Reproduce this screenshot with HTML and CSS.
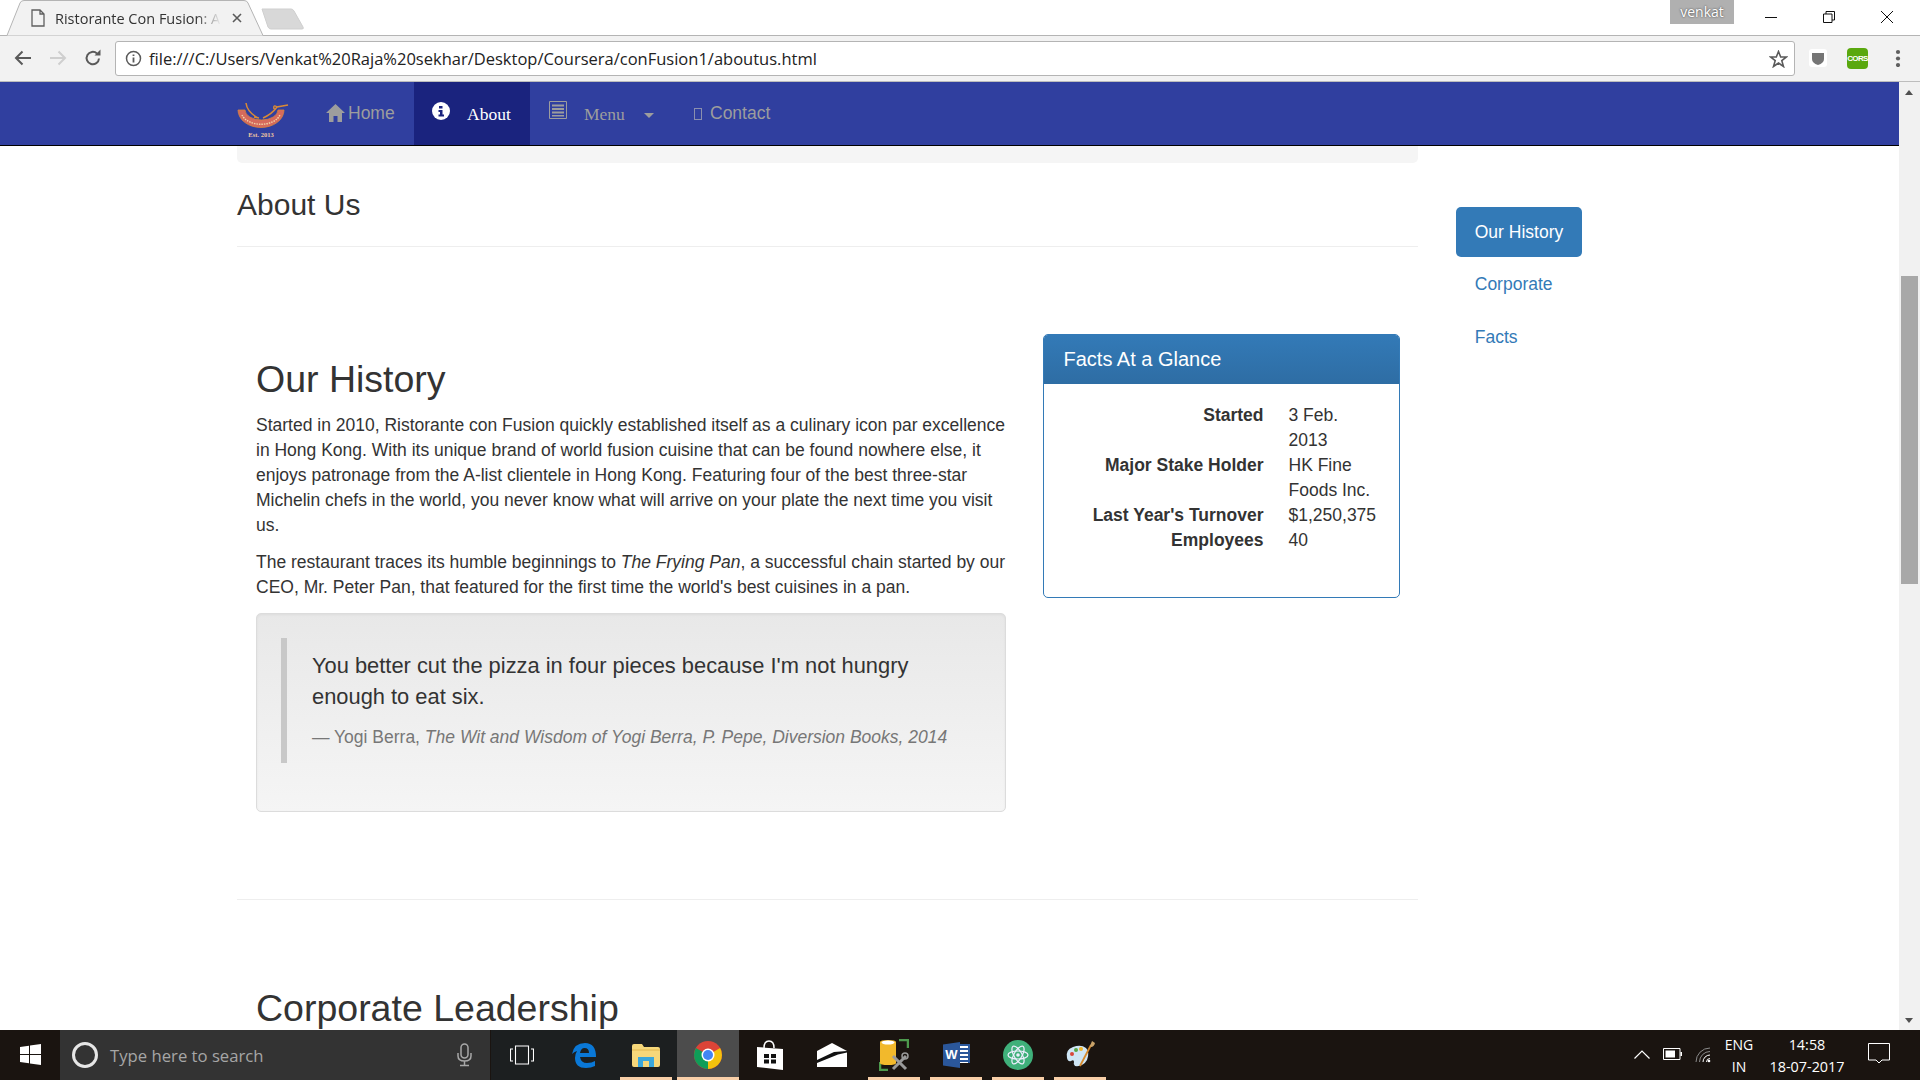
FILE: index.html
```html
<!DOCTYPE html>
<html lang="en">
<head>
<meta charset="utf-8">
<title>Ristorante Con Fusion: About Us</title>
<link rel="stylesheet" href="styles.css">
</head>
<body>
<header class="tabstrip">
  <div class="tab">
    <svg class="tab-shape" width="270" height="36" viewBox="0 0 270 36"><path d="M0 35.5H7L20 3Q21 .5 24 .5H244Q247 .5 248 3L263 35.5H270" fill="#f2f2f2" stroke="#b4b4b4"/></svg>
    <svg class="tab-doc" width="14" height="18" viewBox="0 0 14 18"><path d="M1 1H9L13 5V17H1Z M9 1V5H13" fill="none" stroke="#5f5f5f" stroke-width="1.3"/></svg>
    <span class="tab-title">Ristorante Con Fusion: About Us</span>
    <svg class="tab-x" width="10" height="10" viewBox="0 0 10 10"><path d="M1 1L9 9M9 1L1 9" stroke="#5a5a5a" stroke-width="1.6"/></svg>
  </div>
  <svg class="newtab" width="44" height="22" viewBox="0 0 44 22"><path d="M1 1H30Q32 1 33 3L42 19Q43 21 41 21H10Q8 21 7 19Z" fill="#d8d8d8" stroke="#cfcfcf"/></svg>
  <div class="strip-fill"></div>
  <div class="user">venkat</div>
  <div class="winbtns">
    <svg width="12" height="12" viewBox="0 0 12 12"><path d="M0 6.5H12" stroke="#111"/></svg>
    <svg width="12" height="12" viewBox="0 0 12 12"><path d="M.5 3H9V11.500H.5Z M3 3V.5H11.500V9H9" fill="none" stroke="#111"/></svg>
    <svg width="12" height="12" viewBox="0 0 12 12"><path d="M0 0L12 12M12 0L0 12" stroke="#111"/></svg>
  </div>
</header>
<div class="toolbar">
  <svg class="tb-icon" width="18" height="16" viewBox="0 0 18 16"><path d="M17 8H2M8.500 1.500L2 8L8.500 14.500" fill="none" stroke="#5a5a5a" stroke-width="2"/></svg>
  <svg class="tb-icon" width="18" height="16" viewBox="0 0 18 16"><path d="M1 8H16M9.500 1.500L16 8L9.500 14.500" fill="none" stroke="#cfcfcf" stroke-width="2"/></svg>
  <svg class="tb-icon" width="18" height="18" viewBox="0 0 18 18"><path d="M15 9.500A6.200 6.200 0 1 1 13 4.500" fill="none" stroke="#5a5a5a" stroke-width="2"/><path d="M10.500 6.500H16.500V.5Z" fill="#5a5a5a"/></svg>
  <div class="omnibox">
    <svg width="17" height="17" viewBox="0 0 17 17"><circle cx="8.500" cy="8.500" r="7" fill="none" stroke="#5a5a5a" stroke-width="1.500"/><path d="M8.500 7.500V12.500M8.500 4.500V6" stroke="#5a5a5a" stroke-width="1.800"/></svg>
    <span class="url">file:///C:/Users/Venkat%20Raja%20sekhar/Desktop/Coursera/conFusion1/aboutus.html</span>
    <svg width="19" height="18" viewBox="0 0 19 18"><path d="M9.500 1.500L11.700 7H17.500L12.800 10.600L14.500 16.500L9.500 13L4.500 16.500L6.200 10.600L1.500 7H7.300Z" fill="none" stroke="#5a5a5a" stroke-width="1.600"/></svg>
  </div>
  <div class="ext ext-shield"><svg width="12" height="13" viewBox="0 0 12 13"><path d="M0 1H12V7Q12 11 6 13Q0 11 0 7Z" fill="#757575"/></svg></div>
  <div class="ext-cors">CORS</div>
  <svg class="kebab" width="6" height="18" viewBox="0 0 6 18"><circle cx="3" cy="3" r="2.100" fill="#5f5f5f"/><circle cx="3" cy="9.500" r="2.100" fill="#5f5f5f"/><circle cx="3" cy="16" r="2.100" fill="#5f5f5f"/></svg>
</div>
<div class="viewport">
  <main class="page">
    <nav class="navbar">
      <svg class="logo" width="52" height="36" viewBox="0 0 52 36">
        <path d="M1 7H8A16.500 10 0 0 0 41 7H47A23 17.500 0 0 1 1 7Z" fill="#d66a5c" stroke="#d8843e" stroke-width=".8"/>
        <path d="M5 12A20 13.500 0 0 0 43 12" fill="none" stroke="#f2d3a6" stroke-width="1.400" stroke-dasharray="1.500 1"/>
        <path d="M9 0Q10 9 21 15M22 15L17 14M26 15Q35 11 40 4L51 2M40 4Q36 1 37 6" fill="none" stroke="#d98a35" stroke-width="1.500"/>
        <text x="24" y="34" class="logo-est">Est. 2013</text>
      </svg>
      <a class="navlink nav-home">
        <svg width="19" height="18" viewBox="0 0 19 18"><path d="M9.500 0L19 9H16V18H11.500V12H7.500V18H3V9H0Z" fill="#9d9d9d"/></svg>
        <span class="navtext">Home</span>
      </a>
      <a class="navlink nav-about">
        <svg class="ic-info" width="18" height="18" viewBox="0 0 18 18"><circle cx="9" cy="9" r="9" fill="#fff"/><path d="M7 4H10.500V6.500H7ZM6.500 8H10.500V12.500H12V14.500H6.500V12.500H8V10H6.500Z" fill="#1a237e"/></svg>
        <span class="serif">About</span>
      </a>
      <a class="navlink nav-menu">
        <svg class="ic-list" width="18" height="18" viewBox="0 0 18 18"><path d="M.5.5H17.500V17.500H.5Z" fill="none" stroke="#9d9d9d"/><path d="M3 3.500H15V5.500H3ZM3 7H15V9H3ZM3 10.500H15V12.500H3ZM3 14H15V15.500H3Z" fill="#9d9d9d"/></svg>
        <span class="serif">Menu</span>
        <span class="caret"></span>
      </a>
      <a class="navlink nav-contact">
        <span class="tofu"></span>
        <span class="navtext">Contact</span>
      </a>
    </nav>
    <div class="content">
      <div class="main-col">
        <div class="crumb"></div>
        <h3 class="page-title">About Us</h3>
        <hr class="rule">
        <section class="history">
          <div class="story">
            <h2 class="heading">Our History</h2>
            <p>Started in 2010, Ristorante con Fusion quickly established itself as a culinary icon par excellence in Hong Kong. With its unique brand of world fusion cuisine that can be found nowhere else, it enjoys patronage from the A-list clientele in Hong Kong. Featuring four of the best three-star Michelin chefs in the world, you never know what will arrive on your plate the next time you visit us.</p>
            <p>The restaurant traces its humble beginnings to <em>The Frying Pan</em>, a successful chain started by our CEO, Mr. Peter Pan, that featured for the first time the world's best cuisines in a pan.</p>
            <div class="well">
              <blockquote>
                <p>You better cut the pizza in four pieces because I'm not hungry enough to eat six.</p>
                <footer>— Yogi Berra, <cite>The Wit and Wisdom of Yogi Berra, P. Pepe, Diversion Books, 2014</cite></footer>
              </blockquote>
            </div>
          </div>
          <aside class="card-col">
            <div class="card">
              <div class="card-head">Facts At a Glance</div>
              <dl class="facts">
                <dt>Started</dt><dd>3 Feb. 2013</dd>
                <dt>Major Stake Holder</dt><dd>HK Fine Foods Inc.</dd>
                <dt>Last Year's Turnover</dt><dd>$1,250,375</dd>
                <dt>Employees</dt><dd>40</dd>
              </dl>
            </div>
          </aside>
        </section>
        <hr class="rule rule-2">
        <h2 class="heading heading-2">Corporate Leadership</h2>
      </div>
      <ul class="pills">
        <li class="pill active">Our History</li>
        <li class="pill">Corporate</li>
        <li class="pill">Facts</li>
      </ul>
    </div>
  </main>
  <div class="scrollbar">
    <span class="arrow-up"></span>
    <div class="thumb"></div>
    <span class="arrow-down"></span>
  </div>
</div>
<footer class="taskbar">
  <div class="start">
    <svg width="21" height="21" viewBox="0 0 21 21"><path d="M0 3L9 1.700V10H0ZM10 1.500L21 0V10H10ZM0 11H9V19.300L0 18ZM10 11H21V21L10 19.500Z" fill="#fff"/></svg>
  </div>
  <div class="search">
    <svg width="28" height="28" viewBox="0 0 28 28"><circle cx="14" cy="14" r="11.500" fill="none" stroke="#e6e6e6" stroke-width="3"/></svg>
    <span class="search-text">Type here to search</span>
    <svg class="mic" width="15" height="24" viewBox="0 0 15 24"><rect x="4" y="1" width="7" height="14" rx="3.500" fill="none" stroke="#a8a8a8" stroke-width="1.500"/><path d="M1 10V13Q1 18 7.500 18Q14 18 14 13V10M7.500 18V22M3 22.500H12" fill="none" stroke="#a8a8a8" stroke-width="1.500"/></svg>
  </div>
  <div class="apps">
    <div class="app app-dim"><svg width="24" height="20" viewBox="0 0 24 20"><path d="M5.500 1H18.500V19H5.500Z M3 4H.5V16H3M21 4H23.500V16H21" fill="none" stroke="#fff" stroke-width="1.100"/></svg></div>
    <div class="app app-dim"><svg width="26" height="27" viewBox="0 0 26 27"><path d="M1 12Q3 1 14 1Q25 1 25 15H9Q10 21 16 21Q21 21 24 19V24Q20 26 15 26Q4 26 4 16Q4 12 6 9Q3 10 1 12ZM9 11H18Q18 6 13.500 6Q10 6 9 11Z" fill="#0a78d7"/></svg></div>
    <div class="app app-dim app-on"><svg width="28" height="24" viewBox="0 0 28 24"><path d="M0 3Q0 1 2 1H10L12 4H26Q28 4 28 6V22Q28 24 26 24H2Q0 24 0 22Z" fill="#f6d77a"/><path d="M0 7H28" stroke="#e2b64d"/><path d="M6 14H22V24H17V18H11V24H6Z" fill="#3aa7dc"/></svg></div>
    <div class="app app-chrome">
      <svg width="28" height="28" viewBox="0 0 28 28">
        <circle cx="14" cy="14" r="14" fill="#db4437"/>
        <path d="M14 14L26.100 7A14 14 0 0 1 14 28Z" fill="#f4c20d"/>
        <path d="M14 14L14 28A14 14 0 0 1 1.900 7Z" fill="#0f9d58"/>
        <circle cx="14" cy="14" r="6.500" fill="#fff"/><circle cx="14" cy="14" r="5" fill="#4285f4"/>
      </svg>
    </div>
    <div class="app"><svg width="26" height="30" viewBox="0 0 26 30"><path d="M7 8Q7 1 12 1Q17 1 17 8" fill="none" stroke="#fff" stroke-width="1.500"/><path d="M0 7L26 9V30L0 27Z" fill="#fff"/><path d="M7 14H12V18H7ZM14 14H19V18H14ZM7 19.500H12V23.500H7ZM14 19.500H19V23.500H14Z" fill="#111"/></svg></div>
    <div class="app"><svg width="30" height="24" viewBox="0 0 30 24"><path d="M0 8L15 0L30 8V24H0Z" fill="#fff"/><path d="M0 17L17 9L30 8V9.500L21 11.500L0 20Z" fill="#111"/></svg></div>
    <div class="app app-on">
      <svg width="30" height="32" viewBox="0 0 30 32">
        <path d="M20 1H29V9M1 23V31H9" fill="none" stroke="#4d9a4d" stroke-width="2.500"/>
        <path d="M1 3Q1 1 9 1Q17 1 17 3V24Q17 26 9 26Q1 26 1 24Z" fill="#f2b92c"/><ellipse cx="9" cy="3.500" rx="6.500" ry="2" fill="#fff"/>
        <path d="M14 30L27 17M14 17L27 30" stroke="#9a9a9a" stroke-width="3"/><circle cx="26" cy="17" r="3" fill="none" stroke="#9a9a9a" stroke-width="1.500"/>
      </svg>
    </div>
    <div class="app app-on">
      <div class="word-page"></div>
      <div class="word-cover">W</div>
    </div>
    <div class="app app-on">
      <svg width="30" height="30" viewBox="0 0 30 30"><circle cx="15" cy="15" r="15" fill="#3fb07a"/><g fill="none" stroke="#eef" stroke-width="1.200"><ellipse cx="15" cy="15" rx="10" ry="4"/><ellipse cx="15" cy="15" rx="10" ry="4" transform="rotate(60 15 15)"/><ellipse cx="15" cy="15" rx="10" ry="4" transform="rotate(120 15 15)"/></g><circle cx="15" cy="15" r="1.800" fill="#eef"/></svg>
    </div>
    <div class="app app-on">
      <svg width="30" height="30" viewBox="0 0 30 30"><path d="M2 18Q0 10 8 7Q16 4 21 8Q25 12 22 20Q18 27 10 26Q8 24 9 22Q9 19 6 21Q3 22 2 18Z" fill="#cfe6f5"/><circle cx="7" cy="14" r="2" fill="#d9483b"/><circle cx="11" cy="10" r="2" fill="#5aa84a"/><circle cx="16" cy="9" r="2" fill="#f0b429"/><path d="M15 26L26 5" stroke="#d68a2d" stroke-width="1.800"/><path d="M25 6L27 1L30 3Q29 7 26 7Z" fill="#c9a36a"/></svg>
    </div>
  </div>
  <div class="tray">
    <svg class="tray-chev" width="16" height="9" viewBox="0 0 16 9"><path d="M.5 8.500L8 1L15.500 8.500" fill="none" stroke="#fff" stroke-width="1.200"/></svg>
    <svg class="tray-bat" width="19" height="12" viewBox="0 0 19 12"><path d="M.5.5H17V11.500H.5Z" fill="none" stroke="#fff"/><path d="M2.500 2.500H12V9.500H2.500Z" fill="#fff"/><path d="M17.500 4H19V8H17.500Z" fill="#fff"/></svg>
    <svg class="tray-wifi" width="16" height="16" viewBox="0 0 16 16"><g fill="none" stroke="#8b8b8b"><path d="M1 15A14 14 0 0 1 15 1"/><path d="M4.500 15A10.500 10.500 0 0 1 15 4.500"/></g><path d="M8 15A7 7 0 0 1 15 8" fill="none" stroke="#fff"/><path d="M11.500 15A3.500 3.500 0 0 1 15 11.500" fill="none" stroke="#fff"/><circle cx="14" cy="14" r="1.300" fill="#fff"/></svg>
    <div class="lang"><span>ENG</span><span>IN</span></div>
    <div class="clock"><span>14:58</span><span>18-07-2017</span></div>
    <svg class="tray-note" width="22" height="21" viewBox="0 0 22 21"><path d="M.5.5H21.500V17H14L11 20L8 17H.5Z" fill="none" stroke="#fff"/></svg>
  </div>
</footer>
</body>
</html>
```
FILE: styles.css
```css
* { box-sizing: border-box; }
html, body { margin: 0; height: 100%; overflow: hidden; }
body {
  width: 1920px;
  height: 1080px;
  display: flex;
  flex-direction: column;
  font-family: "Liberation Sans", Arial, sans-serif;
  font-size: 17.5px;
  line-height: 25px;
  color: #333;
  background: #fff;
}

/* Browser tab strip */
.tabstrip {
  height: 36px;
  flex: none;
  display: flex;
  align-items: flex-start;
  background: linear-gradient(#fff 35px, #b4b4b4 35px);
}
.tab {
  position: relative;
  width: 261px;
  height: 36px;
  flex: none;
  display: flex;
  align-items: center;
  padding: 0 0 0 31px;
}
.tab-shape { position: absolute; left: 0; top: 0; }
.tab-doc { position: relative; flex: none; }
.tab-title {
  position: relative;
  margin-left: 10px;
  width: 166px;
  overflow: hidden;
  white-space: nowrap;
  font: 14.5px "Open Sans", sans-serif;
  color: #333;
  -webkit-mask-image: linear-gradient(90deg, #000 85%, transparent);
  mask-image: linear-gradient(90deg, #000 85%, transparent);
}
.tab-x { position: relative; margin-left: 11px; flex: none; }
.newtab { margin-top: 8px; flex: none; }
.strip-fill { flex: 1; }
.user {
  width: 64px;
  height: 24px;
  flex: none;
  background: #b0b0b0;
  color: #fff;
  text-align: center;
  font: 14px/23px "Open Sans", sans-serif;
  text-shadow: 0 0 2px #333;
}
.winbtns {
  width: 186px;
  flex: none;
  display: flex;
  gap: 46px;
  padding: 11px 0 0 31px;
}

/* Browser toolbar */
.toolbar {
  height: 46px;
  flex: none;
  display: flex;
  align-items: center;
  padding: 0 0 1px 14px;
  background: #f2f2f2;
  border-bottom: 1px solid #bdbdbd;
}
.tb-icon { flex: none; margin-right: 17px; }
.toolbar .tb-icon:nth-child(3) { margin-right: 13px; margin-left: 0; }
.omnibox {
  width: 1680px;
  height: 35px;
  flex: none;
  display: flex;
  align-items: center;
  gap: 7px;
  padding: 0 6px 0 9px;
  background: #fff;
  border: 1px solid #b4b4b4;
  border-radius: 3px;
  margin-top: 1px;
}
.url {
  flex: 1;
  font: 16.5px "Open Sans", sans-serif;
  color: #222;
  white-space: nowrap;
}
.ext {
  width: 18px;
  height: 18px;
  margin-left: 14px;
  flex: none;
  display: flex;
  align-items: center;
  justify-content: center;
  background: #fff;
  border-radius: 3px;
}
.ext-cors {
  width: 21px;
  height: 21px;
  margin-left: 20px;
  flex: none;
  background: #5aa80e;
  border-radius: 4px;
  color: #fff;
  font: bold 8px/21px "Liberation Sans", sans-serif;
  letter-spacing: -.6px;
  text-align: center;
  white-space: nowrap;
}
.kebab { margin-left: 27px; flex: none; }

/* Page viewport */
.viewport { flex: 1; min-height: 0; display: flex; overflow: hidden; }
.page { flex: 1; min-width: 0; overflow: hidden; }
.scrollbar {
  width: 21px;
  flex: none;
  position: relative;
  background: #f1f1f1;
}
.thumb {
  position: absolute;
  left: 2px;
  top: 194px;
  width: 17px;
  height: 308px;
  background: #a8a8a8;
}
.arrow-up, .arrow-down {
  position: absolute;
  left: 6px;
  width: 0;
  height: 0;
  border-left: 4.5px solid transparent;
  border-right: 4.5px solid transparent;
}
.arrow-up { top: 8px; border-bottom: 5px solid #505050; }
.arrow-down { bottom: 7px; border-top: 5px solid #505050; }

/* Site navbar */
.navbar {
  height: 64px;
  display: flex;
  align-items: stretch;
  padding-left: 237px;
  background: #303f9f;
  border-bottom: 1px solid #000;
}
.logo { margin-top: 21px; flex: none; width: 52px; margin-right: -2px; }
.logo-est { font: bold 6.5px "Liberation Serif", serif; fill: #f1c9a0; text-anchor: middle; }
.navlink {
  display: flex;
  align-items: center;
  color: #9d9d9d;
  flex: none;
}
.nav-home { margin-left: 39px; width: 88px; padding-bottom: 1px; gap: 3px; }
.navtext { display: block; }
.nav-about {
  width: 116px;
  padding-left: 18px;
  background: #1a237e;
  color: #fff;
}
.ic-info { margin: -6px 17px 0 0; flex: none; }
.serif { font-family: "Liberation Serif", serif; padding-top: 2px; }
.nav-menu { width: 132px; padding-left: 19px; }
.ic-list { margin: -7px 17px 0 0; flex: none; }
.caret {
  width: 0;
  height: 0;
  margin: 4px 0 0 19px;
  border-top: 5.5px solid #9d9d9d;
  border-left: 5.5px solid transparent;
  border-right: 5.5px solid transparent;
}
.nav-contact { margin-left: 32px; gap: 8px; padding-bottom: 1px; }
.tofu {
  width: 8px;
  height: 12px;
  border: 1px solid #8a8fae;
  margin-top: 1px;
}

/* Content */
.content {
  display: flex;
  padding-left: 237px;
}
.main-col { width: 1181px; flex: none; }
.crumb {
  height: 17px;
  background: #f5f5f5;
  border-radius: 0 0 5px 5px;
}
.page-title {
  margin: 25px 0 0;
  font-size: 30px;
  line-height: 33px;
  font-weight: 500;
}
.rule {
  margin: 25px 0 0;
  height: 1px;
  border: 0;
  background: #eee;
}
.history { display: flex; margin-top: 87px; }
.story { width: 788px; padding: 0 19px; flex: none; }
.heading {
  margin: 25px 0 12.5px;
  font-size: 37.5px;
  line-height: 41px;
  font-weight: 500;
}
.story p { margin: 0 0 12.5px; }
.well {
  margin-top: 0;
  height: 199px;
  padding: 24px;
  background: linear-gradient(#e8e8e8, #f5f5f5);
  border: 1px solid #dcdcdc;
  border-radius: 5px;
  box-shadow: inset 0 1px 3px rgba(0,0,0,.05);
}
blockquote {
  margin: 0;
  padding: 12.5px 25px;
  border-left: 6px solid #c8c8c8;
}
.story blockquote p {
  margin: 0 0 12.5px;
  font-size: 21.875px;
  line-height: 31.25px;
}
blockquote footer { font-size: 17.5px; line-height: 25px; color: #777; }
.card-col { width: 393px; padding: 0 18px; flex: none; }
.card {
  background: #fff;
  border: 1.25px solid #337ab7;
  border-radius: 5px;
  height: 264px;
}
.card-head {
  height: 49px;
  padding: 0 19.5px;
  font-size: 20px;
  line-height: 48px;
  color: #fff;
  background: linear-gradient(#337ab7, #2e6da4);
  border-radius: 4px 4px 0 0;
}
.facts {
  display: grid;
  grid-template-columns: 200px 91px;
  column-gap: 25px;
  margin: 0;
  padding: 19px 18.5px 19px 19.5px;
}
.facts dt { font-weight: bold; text-align: right; white-space: nowrap; }
.facts dd { margin: 0; }
.rule-2 { margin-top: 87px; }
.heading-2 { margin: 88px 0 0 19px; }
.pills {
  list-style: none;
  margin: 61px 0 0 38px;
  padding: 0;
  display: flex;
  flex-direction: column;
  align-items: flex-start;
  gap: 2.75px;
}
.pill {
  height: 50px;
  padding: 12.5px 18.75px;
  color: #337ab7;
  border-radius: 5px;
}
.pill.active { background: #337ab7; color: #fff; }

/* Windows taskbar */
.taskbar {
  height: 50px;
  flex: none;
  display: flex;
  align-items: stretch;
  background: #1a1410;
  color: #fff;
}
.start {
  width: 60px;
  flex: none;
  display: flex;
  align-items: center;
  justify-content: center;
  padding-bottom: 2px;
}
.search {
  width: 430px;
  flex: none;
  display: flex;
  align-items: center;
  background: #333;
  padding: 0 18px 0 11px;
}
.search-text {
  flex: 1;
  margin-left: 11px;
  font: 16.7px "Open Sans", sans-serif;
  color: #a6a6a6;
}
.apps { display: flex; flex: none; padding-left: 1px; }
.app {
  display: flex;
  align-items: center;
  justify-content: center;
  width: 62px;
  height: 50px;
  flex: none;
  position: relative;
}
.app-dim { background: #1c1f20; }
.app-on::after {
  content: "";
  position: absolute;
  left: 5px;
  bottom: 0;
  width: 52px;
  height: 3px;
  background: #f8cfa8;
}
.app-chrome {
  background: #4c4c4c;
  border-bottom: 3px solid #f8cfa8;
  padding-top: 3px;
}
.word-page {
  position: absolute;
  left: 34px;
  top: 14px;
  width: 11px;
  height: 19px;
  background: repeating-linear-gradient(#2b579a 0 2px, #fff 2px 4px);
  border-right: 2px solid #2b579a;
}
.word-cover {
  position: absolute;
  left: 18px;
  top: 12px;
  width: 17px;
  height: 26px;
  background: #2b579a;
  clip-path: polygon(0 10%, 100% 0, 100% 100%, 0 90%);
  font: bold 13px/26px "Liberation Sans", sans-serif;
  text-align: center;
  color: #fff;
}

.tray {
  flex: 1;
  display: flex;
  align-items: center;
  padding-left: 523px;
  font: 14px "Open Sans", sans-serif;
}
.tray-chev { flex: none; margin-bottom: 2px; }
.tray-bat { flex: none; margin-left: 13px; margin-bottom: 2px; }
.tray-wifi { flex: none; margin-left: 13px; }
.lang {
  width: 46px;
  margin-left: 5px;
  display: flex;
  flex-direction: column;
  align-items: center;
  gap: 3px;
  line-height: 19px;
}
.clock {
  width: 100px;
  margin-left: -5px;
  display: flex;
  flex-direction: column;
  align-items: center;
  gap: 3px;
  line-height: 19px;
  font-size: 14.4px;
}
.tray-note { flex: none; margin-left: 11px; margin-bottom: 4px; }
```
